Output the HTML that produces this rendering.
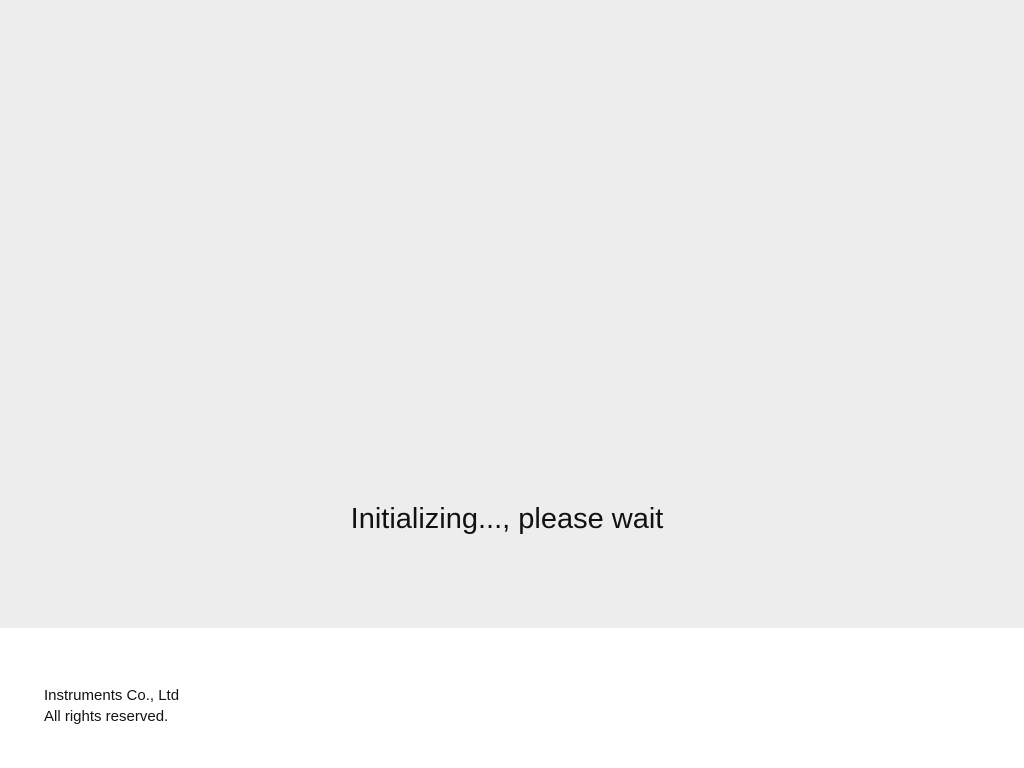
<!DOCTYPE html>
<html><head><style>
body{margin:0;width:1024px;height:768px;background:#fff;font-family:"Liberation Sans",sans-serif;position:relative;overflow:hidden}
.top{position:absolute;left:0;top:0;width:1024px;height:628px;background:#ededed}
.msg{position:absolute;left:0;width:1014px;top:503px;text-align:center;font-size:29px;color:#111}
.foot{position:absolute;left:44px;top:685px;font-size:15px;line-height:21px;color:#111}
</style></head><body>
<div class="top"></div>
<div class="msg">Initializing..., please wait</div>
<div class="foot">Instruments Co., Ltd<br>All rights reserved.</div>
</body></html>
